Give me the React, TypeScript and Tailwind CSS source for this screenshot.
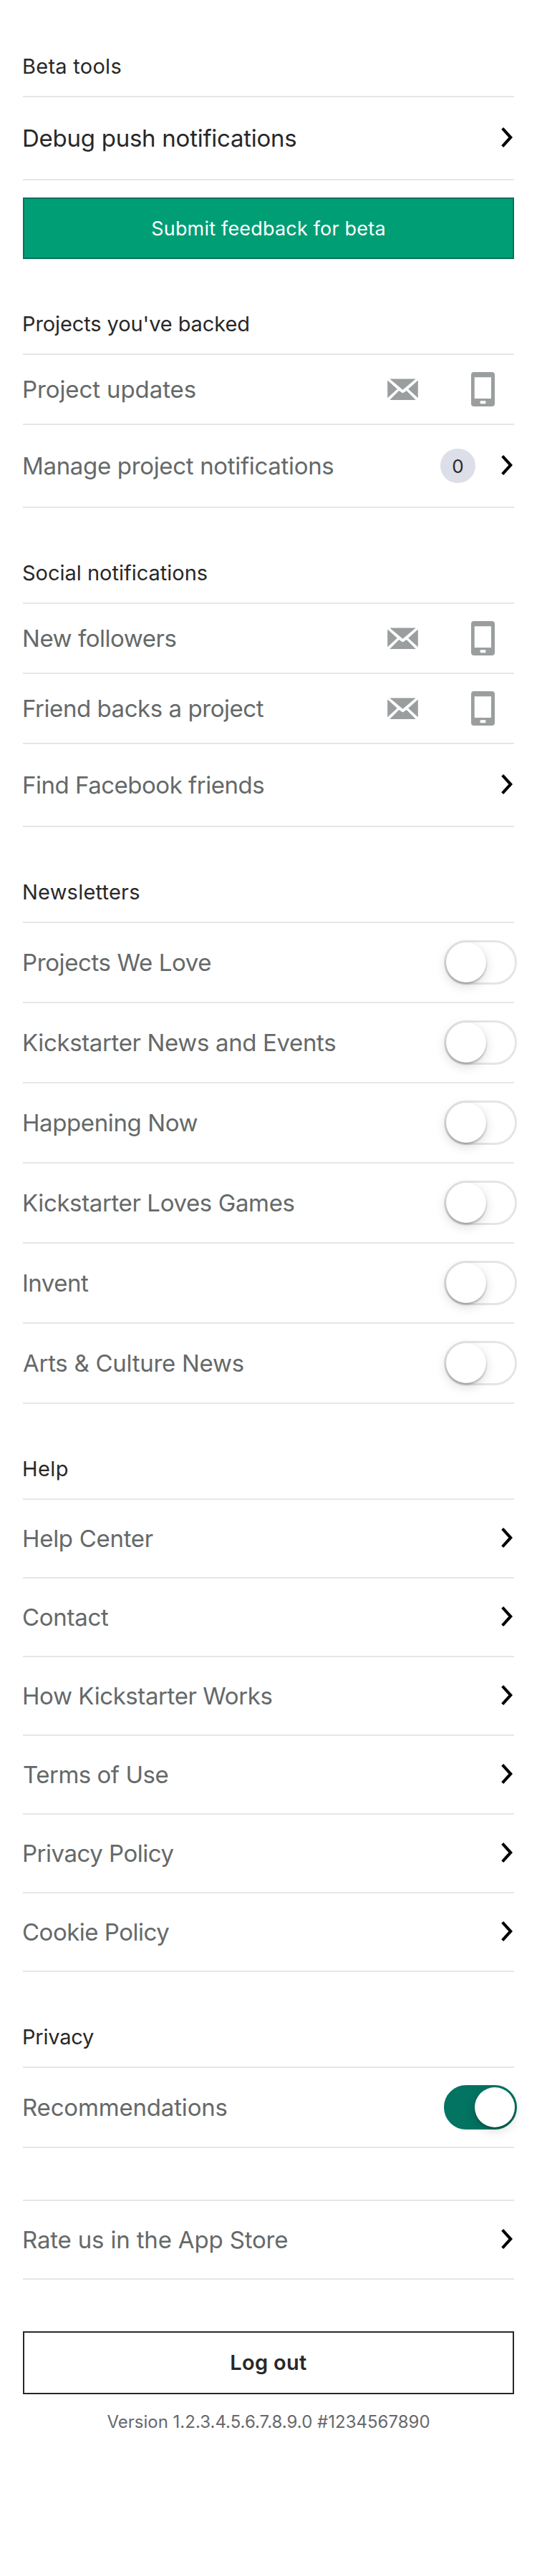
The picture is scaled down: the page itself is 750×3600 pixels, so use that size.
import type { ReactNode } from 'react';

function Chevron() {
  return (
    <svg className="mr-[2px] mb-[2px] shrink-0" width="16" height="28" viewBox="0 0 16 28" fill="none">
      <path d="M1.7 1.4 13.2 14 1.7 26.6" stroke="#000" strokeWidth="4.1" />
    </svg>
  );
}

function Envelope() {
  return (
    <svg className="shrink-0" width="43" height="30" viewBox="0 0 43 30" fill="#9a9e9e">
      <path d="M3.3 .5H39.7L21.5 15.7Z" />
      <path d="M.2 2.6 13.8 14.8.2 27.2Z" />
      <path d="M42.8 2.6 29.2 14.8 42.8 27.2Z" />
      <path d="M3.3 30 16.2 17 21.5 20.6 26.8 17 39.7 30Z" />
    </svg>
  );
}

function Phone() {
  return (
    <svg className="shrink-0" width="33" height="48" viewBox="0 0 33 48" fill="#9a9e9e">
      <path
        fillRule="evenodd"
        d="M4 0H29A4 4 0 0 1 33 4V44A4 4 0 0 1 29 48H4A4 4 0 0 1 0 44V4A4 4 0 0 1 4 0ZM4.7 7.3V37H28V7.3ZM13.4 40.2A.8 .8 0 0 0 12.6 41V43.4A.8 .8 0 0 0 13.4 44.2H19.6A.8 .8 0 0 0 20.4 43.4V41A.8 .8 0 0 0 19.6 40.2Z"
      />
    </svg>
  );
}

function Toggle({ on = false }: { on?: boolean }) {
  return (
    <div
      role="switch"
      aria-checked={on}
      className={
        on
          ? 'mr-[-4px] flex h-[62px] w-[102px] shrink-0 items-center justify-end rounded-full border-[3px] border-[#037362] bg-[#037362]'
          : 'mr-[-4px] flex h-[62px] w-[102px] shrink-0 items-center rounded-full border-[3px] border-[#e5e5e5] bg-white'
      }
    >
      <div className="size-[56px] rounded-full bg-white shadow-[0_5px_16px_rgba(0,0,0,0.15),0_2px_3px_rgba(0,0,0,0.28)]" />
    </div>
  );
}

function Channels() {
  return (
    <div className="mr-[27px] flex items-center gap-[74px]">
      <Envelope />
      <Phone />
    </div>
  );
}

function Heading({ label, tracking, first = false }: { label: string; tracking: string; first?: boolean }) {
  return (
    <h2
      className={`${first ? 'mt-[51px]' : 'mt-[49px]'} box-content flex h-[83px] items-center border-b-2 border-[#e6e6e6] text-[29px] leading-[43px] text-[#282828]`}
    >
      <span className={`-ml-px ${tracking}`}>{label}</span>
    </h2>
  );
}

function Row({
  label,
  tracking,
  height = 'h-[108px]',
  color = 'text-[#656969]',
  children,
}: {
  label: string;
  tracking: string;
  height?: string;
  color?: string;
  children: ReactNode;
}) {
  return (
    <div className={`box-content flex items-center justify-between border-b-2 border-[#e6e6e6] ${height}`}>
      <span className={`whitespace-nowrap text-[33px] leading-[50px] ${color} ${tracking}`}>{label}</span>
      {children}
    </div>
  );
}

const newsletters = [
  { label: 'Projects We Love', tracking: '-ml-px tracking-[-0.39px]' },
  { label: 'Kickstarter News and Events', tracking: '-ml-px tracking-[-0.36px]' },
  { label: 'Happening Now', tracking: '-ml-px tracking-[-0.4px]' },
  { label: 'Kickstarter Loves Games', tracking: '-ml-px tracking-[-0.38px]' },
  { label: 'Invent', tracking: '-ml-px tracking-[-0.52px]' },
  { label: 'Arts & Culture News', tracking: 'tracking-[-0.28px]' },
];

const helpLinks = [
  { label: 'Help Center', tracking: '-ml-px tracking-[-0.3px]' },
  { label: 'Contact', tracking: '-ml-px tracking-[-0.27px]' },
  { label: 'How Kickstarter Works', tracking: '-ml-px tracking-[-0.41px]' },
  { label: 'Terms of Use', tracking: 'tracking-[-0.49px]' },
  { label: 'Privacy Policy', tracking: '-ml-px tracking-[-0.49px]' },
  { label: 'Cookie Policy', tracking: '-ml-px tracking-[-0.5px]' },
];

export default function App() {
  return (
    <main className="flex h-[3600px] w-[750px] flex-col bg-white px-8 font-['Inter','Liberation_Sans',sans-serif]">
      <Heading first label="Beta tools" tracking="tracking-[0.27px]" />
      <Row
        label="Debug push notifications"
        tracking="-ml-px tracking-[-0.26px]"
        height="h-[114px]"
        color="text-[#282828]"
      >
        <Chevron />
      </Row>
      <button className="mt-6 flex h-[86px] shrink-0 items-center justify-center border-2 border-[#037362] bg-[#009e74] text-[27px] leading-[41px] tracking-[0.19px] text-white">
        Submit feedback for beta
      </button>

      <Heading label="Projects you've backed" tracking="tracking-[-0.1px]" />
      <Row label="Project updates" tracking="-ml-px tracking-[-0.1px]" height="h-[96px]">
        <Channels />
      </Row>
      <Row label="Manage project notifications" tracking="-ml-px tracking-[-0.33px]" height="h-[114px]">
        <div className="flex items-center gap-9">
          <span className="flex h-12 w-[49px] items-center justify-center rounded-full bg-[#dcdee8] text-[26px] text-[#282828]">
            0
          </span>
          <Chevron />
        </div>
      </Row>

      <Heading label="Social notifications" tracking="tracking-[-0.01px]" />
      <Row label="New followers" tracking="-ml-px tracking-[-0.47px]" height="h-[96px]">
        <Channels />
      </Row>
      <Row label="Friend backs a project" tracking="-ml-px tracking-[-0.45px]" height="h-[96px]">
        <Channels />
      </Row>
      <Row label="Find Facebook friends" tracking="-ml-px tracking-[-0.49px]" height="h-[114px]">
        <Chevron />
      </Row>

      <Heading label="Newsletters" tracking="tracking-[0.22px]" />
      {newsletters.map((item) => (
        <Row key={item.label} label={item.label} tracking={item.tracking} height="h-[110px]">
          <Toggle />
        </Row>
      ))}

      <Heading label="Help" tracking="tracking-[0.41px]" />
      {helpLinks.map((item) => (
        <Row key={item.label} label={item.label} tracking={item.tracking}>
          <Chevron />
        </Row>
      ))}

      <Heading label="Privacy" tracking="tracking-[-0.23px]" />
      <Row label="Recommendations" tracking="-ml-px tracking-[-0.17px]" height="h-[110px]">
        <Toggle on />
      </Row>

      <div className="mt-[72px] border-t-2 border-[#e6e6e6]">
        <Row label="Rate us in the App Store" tracking="-ml-px tracking-[-0.17px]">
          <Chevron />
        </Row>
      </div>

      <button className="mt-[72px] flex h-[88px] shrink-0 items-center justify-center border-2 border-[#282828] text-[29px] leading-[44px] font-semibold tracking-[0.3px] text-[#282828]">
        Log out
      </button>
      <p className="mt-6 text-center text-[24px] leading-[30px] text-[#68686c]">
        Version 1.2.3.4.5.6.7.8.9.0 #1234567890
      </p>
    </main>
  );
}
